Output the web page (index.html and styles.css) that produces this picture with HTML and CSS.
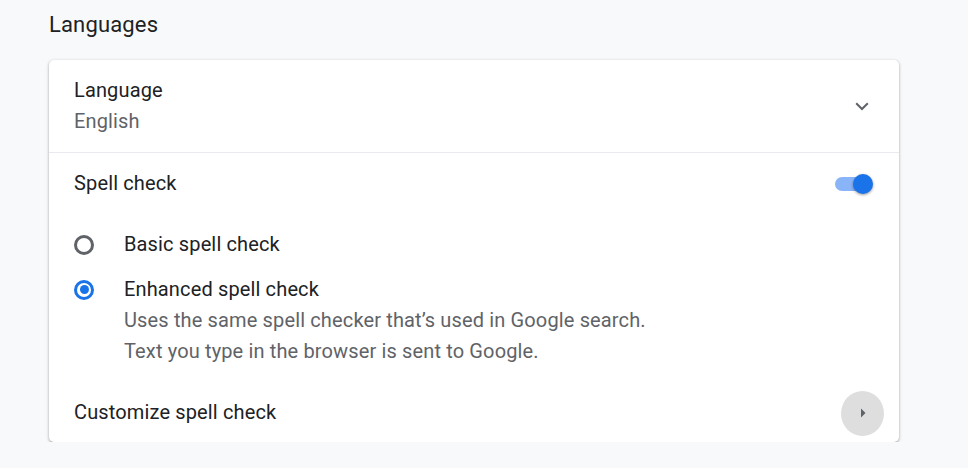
FILE: index.html
```html
<!DOCTYPE html>
<html lang="en">
<head>
<meta charset="utf-8">
<title>Languages</title>
<link rel="stylesheet" href="styles.css">
</head>
<body>
<main class="page">
  <h2 class="section-title">Languages</h2>
  <section class="card">
    <div class="row row-lang">
      <div class="row-text">
        <div class="primary">Language</div>
        <div class="secondary">English</div>
      </div>
      <div class="row-action">
        <svg class="chevron" width="14" height="9" viewBox="0 0 14 9" aria-hidden="true">
          <path d="M1.2 1.2 L7 7 L12.8 1.2" fill="none" stroke="#5f6368" stroke-width="2"/>
        </svg>
      </div>
    </div>
    <div class="divider"></div>
    <div class="row row-spell">
      <div class="primary">Spell check</div>
      <div class="row-action row-action-end">
        <span class="toggle"><span class="toggle-knob"></span></span>
      </div>
    </div>
    <div class="radio-group">
      <div class="radio-row">
        <span class="radio"></span>
        <div class="radio-text">
          <div class="primary">Basic spell check</div>
        </div>
      </div>
      <div class="radio-row radio-row-checked">
        <span class="radio radio-checked"><span class="radio-dot"></span></span>
        <div class="radio-text">
          <div class="primary">Enhanced spell check</div>
          <div class="secondary">Uses the same spell checker that’s used in Google search.</div>
          <div class="secondary">Text you type in the browser is sent to Google.</div>
        </div>
      </div>
    </div>
    <div class="row row-custom">
      <div class="primary">Customize spell check</div>
      <div class="row-action">
        <span class="arrow-btn">
          <svg width="8" height="12" viewBox="0 0 8 12" aria-hidden="true">
            <path d="M2 1.5 L6.5 6 L2 10.5 Z" fill="#5f6368"/>
          </svg>
        </span>
      </div>
    </div>
  </section>
</main>
</body>
</html>
```
FILE: styles.css
```css
html, body {
  margin: 0;
  padding: 0;
  background: #f8f9fa;
}
body {
  font-family: Roboto, "Noto Sans", Arial, sans-serif;
  color: #202124;
}
.page {
  padding: 10px 0 0 49px;
  width: 850px;
}
.section-title {
  margin: 0;
  font-size: 22px;
  font-weight: 400;
  line-height: 30px;
  height: 50px;
  letter-spacing: 0.15px;
}
.card {
  background: #fff;
  border-radius: 5px;
  box-shadow: 0 1px 2px rgba(60, 64, 67, 0.3), 0 1px 3px 1px rgba(60, 64, 67, 0.15);
  font-size: 20px;
  line-height: 31px;
  letter-spacing: 0.14px;
}
.primary {
  color: #202124;
}
.secondary {
  color: #5f6368;
}
.row {
  display: flex;
  align-items: center;
  padding: 0 25px;
}
.row-text {
  flex: 1;
}
.row-lang {
  padding-top: 15px;
  padding-bottom: 15px;
}
.row-spell {
  padding-top: 15px;
  padding-bottom: 30px;
}
.row-custom {
  padding-top: 30px;
  padding-bottom: 14px;
}
.row > .primary {
  flex: 1;
}
.row-action {
  width: 44px;
  display: flex;
  justify-content: center;
  align-items: center;
  margin-right: -10px;
  height: 31px;
}
.row-action-end {
  justify-content: flex-end;
}
.chevron {
  display: block;
}
.divider {
  height: 1px;
  background: #e8eaed;
}
.toggle {
  position: relative;
  display: block;
  flex: none;
  width: 35px;
  height: 14px;
  border-radius: 7px;
  background: #8ab4f8;
  margin-right: 14px;
}
.toggle-knob {
  position: absolute;
  right: -3px;
  top: -3px;
  width: 20px;
  height: 20px;
  border-radius: 50%;
  background: #1a73e8;
  box-shadow: 0 1px 3px rgba(0, 0, 0, 0.4);
}
.radio-group {
  display: flex;
  flex-direction: column;
  gap: 14px;
  padding-left: 25px;
}
.radio-row {
  display: flex;
  align-items: flex-start;
}
.radio {
  box-sizing: border-box;
  width: 20px;
  height: 20px;
  border: 3px solid #5f6368;
  border-radius: 50%;
  margin-top: 5.5px;
  margin-right: 30px;
  flex: none;
  display: flex;
  align-items: center;
  justify-content: center;
}
.radio-checked {
  border-color: #1a73e8;
}
.radio-dot {
  width: 9px;
  height: 9px;
  border-radius: 50%;
  background: #1a73e8;
}
.arrow-btn {
  width: 45px;
  height: 45px;
  border-radius: 50%;
  background: #dedede;
  display: flex;
  align-items: center;
  justify-content: center;
  margin-top: 1px;
  margin-left: 1px;
}
.arrow-btn svg {
  display: block;
}
```
